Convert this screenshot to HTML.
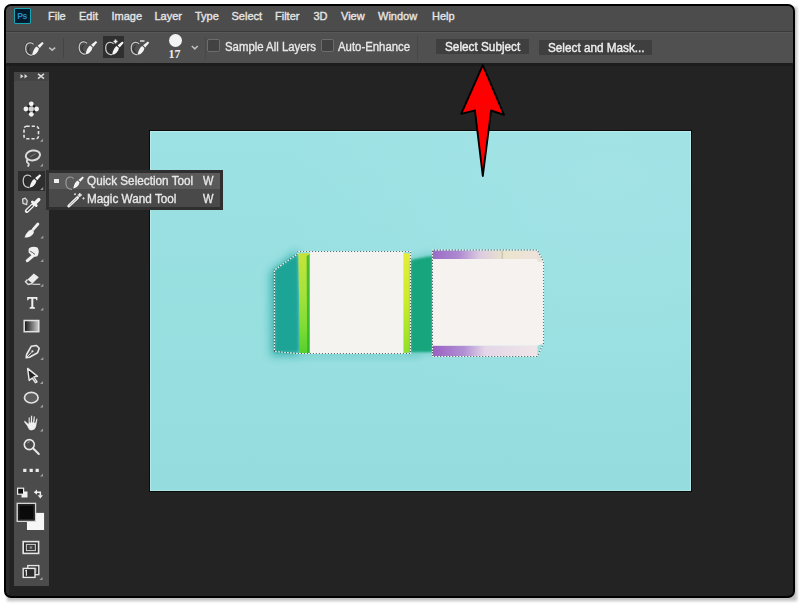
<!DOCTYPE html>
<html><head><meta charset="utf-8">
<style>
*{margin:0;padding:0;box-sizing:border-box}
html,body{width:800px;height:604px;overflow:hidden;background:#fff;font-family:"Liberation Sans",sans-serif}
.a{position:absolute}
#shadow{position:absolute;left:6.5px;top:7px;width:790px;height:594px;background:rgba(0,0,0,.25);filter:blur(1.4px)}
#frame{position:absolute;left:4px;top:3.6px;width:791px;height:594.5px;background:#232323;border:2px solid #000;border-radius:7px;overflow:hidden}
#inner{position:absolute;left:-6px;top:-6px;width:800px;height:604px}
.menu{position:absolute;top:9px;color:#e6e6e6;-webkit-text-stroke:0.35px #e6e6e6;font-size:11px;line-height:14px;white-space:nowrap}
.opt{position:absolute;color:#e8e8e8;-webkit-text-stroke:0.35px #e8e8e8;font-size:11.5px;line-height:14px;white-space:nowrap}
.btn{position:absolute;height:16px;background:#3f3f3f;color:#ededed;-webkit-text-stroke:0.4px #ededed;font-size:11.5px;line-height:16px;white-space:nowrap}
.cb{position:absolute;width:12.8px;height:12.8px;border:1.5px solid #6c6c6c;background:#424242;border-radius:2px}
svg{position:absolute;overflow:visible}
.ic{fill:none;stroke:#e8e8e8;stroke-width:1.4;stroke-linecap:round;stroke-linejoin:round}
.fl{fill:#ececec;stroke:none}
.tri{position:absolute;width:0;height:0;border-left:3px solid transparent;border-bottom:3px solid #9a9a9a}
</style></head>
<body>
<div id="shadow"></div>
<div id="frame"><div id="inner">
  <!-- menubar -->
  <div class="a" style="left:0;top:0;width:800px;height:31px;background:#4c4c4c"></div>
  <div class="a" style="left:0;top:31px;width:800px;height:1px;background:#3b3b3b"></div>
  <!-- Ps logo -->
  <div class="a" style="left:14px;top:8.6px;width:17px;height:16px;background:#001a30;border:1.6px solid #1aa5b5;border-radius:1px"></div>
  <div class="a" style="left:17.2px;top:11px;font-size:8.5px;line-height:11px;color:#2a8fc8;font-weight:bold;letter-spacing:-0.3px">Ps</div>

  <div class="menu" style="left:48px">File</div>
  <div class="menu" style="left:79px">Edit</div>
  <div class="menu" style="left:111.5px">Image</div>
  <div class="menu" style="left:154.5px">Layer</div>
  <div class="menu" style="left:195px">Type</div>
  <div class="menu" style="left:231.5px">Select</div>
  <div class="menu" style="left:275px">Filter</div>
  <div class="menu" style="left:313.5px">3D</div>
  <div class="menu" style="left:341px">View</div>
  <div class="menu" style="left:378px">Window</div>
  <div class="menu" style="left:432px">Help</div>

  <!-- options bar -->
  <div class="a" style="left:0;top:32px;width:800px;height:31px;background:#505050"></div>
  <div class="a" style="left:0;top:32px;width:800px;height:1px;background:#585858"></div>
  <div class="a" style="left:0;top:63px;width:800px;height:3px;background:#1d1d1d"></div>
  <div class="a" style="left:63px;top:38px;width:1px;height:20px;background:#444"></div>
  <div class="a" style="left:204.5px;top:37px;width:1px;height:22px;background:#484848"></div>
  <div class="a" style="left:417px;top:36px;width:1px;height:24px;background:#474747"></div>
  <div class="a" style="left:103px;top:36px;width:21px;height:22px;background:#2f2f2f"></div>

  <div class="cb" style="left:207.1px;top:39.8px"></div>
  <div class="opt" style="left:224.8px;top:40.3px;font-size:12.3px;transform:scaleX(0.925);transform-origin:0 0">Sample All Layers</div>
  <div class="cb" style="left:321.2px;top:39.8px"></div>
  <div class="opt" style="left:338.4px;top:40.3px;font-size:12.3px;transform:scaleX(0.925);transform-origin:0 0">Auto-Enhance</div>
  <div class="btn" style="left:435.5px;top:39.2px;width:93px;height:15.3px"></div><div class="opt" style="left:444.8px;top:40.8px;font-size:12.4px;transform:scaleX(0.95);transform-origin:0 0;color:#eee;-webkit-text-stroke:0.4px #eee">Select Subject</div>
  <div class="btn" style="left:538.7px;top:40px;width:113px;height:15.6px"></div><div class="opt" style="left:548px;top:41.3px;font-size:12.3px;transform:scaleX(0.955);transform-origin:0 0;color:#eee;-webkit-text-stroke:0.4px #eee">Select and Mask...</div>

  <!-- brush size -->
  <div class="a" style="left:168.5px;top:34px;width:13px;height:13px;border-radius:50%;background:#f4f4f4"></div>
  <div class="a" style="left:168.5px;top:47.3px;font-family:'Liberation Serif',serif;font-size:12px;line-height:14px;color:#ececec;font-weight:bold">17</div>

  <!-- canvas image -->
  <div class="a" style="left:149px;top:130px;width:543px;height:362px;background:#0b0b0b"></div>
  <div class="a" style="left:150px;top:131px;width:541px;height:360px;background:radial-gradient(ellipse 60% 70% at 85% 15%,rgba(170,230,233,.5) 0%,rgba(170,230,233,0) 100%),linear-gradient(180deg,#9ce1e3 0%,#98dfe0 55%,#95dcdf 100%)"></div>
  <div class="a" style="left:150px;top:131px;width:541px;height:360px;box-shadow:inset 1px 1px 0 rgba(200,240,242,.6),inset -1px -1px 0 rgba(200,240,242,.5)"></div>


  <svg width="800" height="604" style="left:0;top:0">
    <defs>
      <filter id="bl4" x="-50%" y="-50%" width="200%" height="200%"><feGaussianBlur stdDeviation="4"/></filter>
      <filter id="bl1" x="-20%" y="-20%" width="140%" height="140%"><feGaussianBlur stdDeviation="0.8"/></filter>
      <filter id="bl15" x="-30%" y="-30%" width="160%" height="160%"><feGaussianBlur stdDeviation="1.6"/></filter>
      <linearGradient id="gstrip" x1="0" y1="0" x2="0" y2="1">
        <stop offset="0" stop-color="#c6e43a"/><stop offset=".4" stop-color="#a6e23c"/><stop offset=".75" stop-color="#7ddc34"/><stop offset="1" stop-color="#56cf2c"/>
      </linearGradient>
      <linearGradient id="ystrip" x1="0" y1="0" x2="0" y2="1">
        <stop offset="0" stop-color="#e4ee3a"/><stop offset=".5" stop-color="#c8ec2a"/><stop offset="1" stop-color="#8fe02a"/>
      </linearGradient>
      <linearGradient id="ptop" x1="0" y1="0" x2="1" y2="0">
        <stop offset="0" stop-color="#9a6cc6"/><stop offset=".25" stop-color="#ae8ad0"/><stop offset=".45" stop-color="#dccbe0"/><stop offset=".7" stop-color="#ebe4cc"/><stop offset="1" stop-color="#eee2dc"/>
      </linearGradient>
      <linearGradient id="pbot" x1="0" y1="0" x2="1" y2="0">
        <stop offset="0" stop-color="#9a60c2"/><stop offset=".3" stop-color="#b290d4"/><stop offset=".5" stop-color="#e4d6e8"/><stop offset="1" stop-color="#f0e6e8"/>
      </linearGradient>
      <linearGradient id="gstrip2" x1="0" y1="0" x2="1" y2="0">
        <stop offset="0" stop-color="#b4e64a"/><stop offset=".6" stop-color="#78d838"/><stop offset="1" stop-color="#2eb42a"/>
      </linearGradient>
    </defs>
    <!-- soft shadows -->
    <path d="M270,272 L297,250 L300,356 L271,356Z" fill="#22a8a0" filter="url(#bl4)" opacity=".75"/>
    <path d="M409,260 L434,254 L434,352 L409,352Z" fill="#14a58a" filter="url(#bl4)" opacity=".45"/>
    <path d="M300,350 L420,350 L420,358 L300,358Z" fill="#4bb8b4" filter="url(#bl4)" opacity=".35"/>
    <!-- left object -->
    <path d="M274.5,270 L298,254 L299,352 L275,352Z" fill="#1ca496" filter="url(#bl15)"/>
    <path d="M298.3,253.5 L309.8,253 L309.8,353 L300,353 Z" fill="url(#gstrip)"/>
    <path d="M306.6,256 L309.8,254 L309.8,353 L307.2,353Z" fill="#22b02a" opacity=".75"/>
    <rect x="309.8" y="252" width="94" height="101.5" fill="#f5f3ef"/>
    <path d="M403.5,253 L410.5,254 L410.5,352 L403.5,353Z" fill="url(#ystrip)"/>
    <!-- between -->
    <path d="M410.7,260 L432.5,256 L432.5,352 L410.7,352Z" fill="#12a57c" filter="url(#bl1)"/>
    <!-- right object -->
    <rect x="432.5" y="250.5" width="105" height="9" fill="url(#ptop)"/>
    <rect x="432.5" y="345.5" width="105" height="10.5" fill="url(#pbot)"/>
    <path d="M432.5,259 L537.3,259 L543.5,261.7 L543.5,343.5 L537.3,345.8 L432.5,345.8Z" fill="#f5f2ef"/>
    <path d="M537.3,250 L543.5,261.7 L537.3,261.7Z" fill="#e6e4d8"/>
    <path d="M502.2,251 L502.2,259" stroke="#b9b49c" stroke-width="0.8"/>
    <!-- marching ants -->
    <g fill="none" stroke-width="1.1" stroke-dasharray="1.6 1.4">
      <path d="M274.5,351.5 L274.5,270 L298,253.5 L298,251.5 L410.5,251.5 L410.5,353.5 L298,353.5 Z M432.5,351 L432.5,250 L537.3,250 L543.5,261.7 L543.5,343.5 L537.3,356.5 L432.5,356.5Z" stroke="#3f5050" stroke-opacity=".75"/>
      <path d="M274.5,351.5 L274.5,270 L298,253.5 L298,251.5 L410.5,251.5 L410.5,353.5 L298,353.5 Z M432.5,351 L432.5,250 L537.3,250 L543.5,261.7 L543.5,343.5 L537.3,356.5 L432.5,356.5Z" stroke="#fbfbfb" stroke-dashoffset="1.5"/>
    </g>
  </svg>

  <!-- tools panel -->
  <div class="a" style="left:6px;top:66px;width:3px;height:532px;background:#2a2a2a"></div>
  <div class="a" style="left:13.5px;top:72px;width:35.5px;height:514px;background:#4b4b4b"></div>
  <div class="a" style="left:13.5px;top:72px;width:35.5px;height:9.3px;background:#444444"></div>
  <div class="a" style="left:18px;top:171px;width:27px;height:20px;background:#2e2e2e"></div>

  <!-- flyout -->
  <div class="a" style="left:46px;top:170.5px;width:177px;height:39.8px;background:#2f2f2f"></div>
  <div class="a" style="left:48.5px;top:173.3px;width:171px;height:16.5px;background:#5a5a5a"></div>
  <div class="a" style="left:48.5px;top:189.8px;width:171px;height:17.4px;background:#494949"></div>
  <div class="a" style="left:54px;top:179px;width:4.5px;height:4.5px;background:#f0f0f0"></div>
  <div class="opt" style="left:87.2px;top:174.6px;font-size:12.3px;transform:scaleX(0.955);transform-origin:0 0">Quick Selection Tool</div>
  <div class="opt" style="left:202.8px;top:174.6px;font-size:12.3px;transform:scaleX(0.9);transform-origin:0 0">W</div>
  <div class="opt" style="left:87.2px;top:192.2px;font-size:12.3px;transform:scaleX(0.955);transform-origin:0 0">Magic Wand Tool</div>
  <div class="opt" style="left:202.8px;top:192.2px;font-size:12.3px;transform:scaleX(0.9);transform-origin:0 0">W</div>


  <!-- ICONS -->
  <svg width="800" height="604" style="left:0;top:0">
    <defs>
      <symbol id="qs" viewBox="0 0 19 14" overflow="visible">
        <path d="M8.6,2.4 C7.6,1.2 6,0.6 4.4,0.9 C2,1.4 0.7,3.6 0.7,6.6 C0.7,9.8 2.4,12.4 5.4,13.1 L7,13.2" fill="none" stroke="#1e1e1e" stroke-width="3" opacity=".3"/>
        <path d="M8.6,2.4 C7.6,1.2 6,0.6 4.4,0.9 C2,1.4 0.7,3.6 0.7,6.6 C0.7,9.8 2.4,12.4 5.4,13.1 L7,13.2" fill="none" stroke="#c6c6c6" stroke-width="1.3"/>
        <path d="M5.4,4.2 C3.6,4.8 3,7 3.4,8.6 C3.7,9.8 4.4,10.6 5.6,11" fill="none" stroke="#2a2a2a" stroke-width="1"/>
        <path d="M14,6.4 L11.6,4.6 C9.6,6 7.8,9 7.1,13.3 C10.6,12.8 13.1,10.4 14,6.4Z" fill="#f4f4f4"/>
        <path d="M12.6,3.8 L17.3,0 L18.7,1.3 L14.8,5.9Z" fill="#f4f4f4"/>
      </symbol>
      <symbol id="tri" viewBox="0 0 3 3" overflow="visible"><path d="M3,0 L3,3 L0,3Z" fill="#b0b0b0" opacity=".85"/></symbol>
    </defs>
    <!-- options bar icons -->
    <use href="#qs" x="25" y="42" width="19" height="14"/>
    <path d="M49.2,47.6 L52.2,50.2 L55.2,47.6" fill="none" stroke="#bdbdbd" stroke-width="1.6"/>
    <use href="#qs" x="78.5" y="41" width="19" height="14"/>
    <use href="#qs" x="105" y="41.5" width="19" height="14"/>
    <path d="M115.5,39.5 v4 M113.5,41.5 h4" stroke="#f0f0f0" stroke-width="1.6"/>
    <use href="#qs" x="130.5" y="41.5" width="19" height="14"/>
    <path d="M140,41 h4.5" stroke="#e0e0e0" stroke-width="1.6"/>
    <path d="M191.8,46 L194.8,48.8 L197.8,46" fill="none" stroke="#bdbdbd" stroke-width="1.6"/>

    <!-- panel header -->
    <path d="M20.5,74 L23.5,76.2 L20.5,78.4Z M24.5,74 L27.5,76.2 L24.5,78.4Z" fill="#d8d8d8"/>
    <path d="M38,73.8 L44,78.6 M44,73.8 L38,78.6" stroke="#d8d8d8" stroke-width="1.5"/>

    <!-- move -->
    <g fill="#f2f2f2">
      <circle cx="31.3" cy="103.8" r="2.4"/><circle cx="25.9" cy="109" r="2.4"/>
      <circle cx="36.6" cy="109" r="2.4"/><circle cx="31.3" cy="114.3" r="2.4"/>
      <rect x="28.8" y="106.5" width="5" height="5" fill="#cfcfcf"/>
    </g>
    <g fill="#151515"><circle cx="28.6" cy="106.3" r="1.1"/><circle cx="34" cy="106.3" r="1.1"/><circle cx="28.6" cy="111.7" r="1.1"/><circle cx="34" cy="111.7" r="1.1"/></g>
    <!-- marquee -->
    <rect x="24" y="126.3" width="14.5" height="12.5" rx="2.5" fill="none" stroke="#e6e6e6" stroke-width="1.6" stroke-dasharray="3.2 2"/>
    <use href="#tri" x="40" y="138.8" width="3" height="3"/>
    <!-- lasso -->
    <ellipse cx="32.9" cy="155.4" rx="7.2" ry="4.9" transform="rotate(-10 32.9 155.4)" fill="#474747" stroke="#dcdcdc" stroke-width="2"/>
    <path d="M30.2,156.8 L35.6,153.6" stroke="#757575" stroke-width="1.1"/>
    <path d="M27.4,159.6 C26.2,161.2 27,162.6 28.2,163.2 C29,163.8 28.8,165 28.2,166" fill="none" stroke="#dcdcdc" stroke-width="1.8" stroke-linecap="round"/>
    <use href="#tri" x="40" y="163.5" width="3" height="3"/>
    <!-- quick selection (selected) -->
    <use href="#qs" x="22.5" y="174.3" width="19" height="14"/>
    <use href="#tri" x="40.2" y="187" width="3" height="3"/>
    <!-- eyedropper -->
    <path d="M22.6,199.2 L25.2,198.2 L27.2,200.6 L26.6,204.6 L23,203.4Z" fill="#5a5a5a" stroke="#d8d8d8" stroke-width="1.3" stroke-linejoin="round"/>
    <path d="M26.8,211 L32.6,205.4" stroke="#ececec" stroke-width="4" stroke-linecap="round"/>
    <path d="M27.2,210.6 L32.2,205.8" stroke="#333" stroke-width="1.3" stroke-linecap="round"/>
    <path d="M32.4,202 L36.2,205.6" stroke="#f4f4f4" stroke-width="2.8" stroke-linecap="round"/>
    <path d="M35,203.2 L38.8,199.6" stroke="#f4f4f4" stroke-width="3.4" stroke-linecap="round"/>
    <!-- brush -->
    <path d="M37.9,224 L33.2,229.4" stroke="#f0f0f0" stroke-width="2.8" stroke-linecap="round"/>
    <path d="M31.6,229.6 L34,231.8 C33.2,235.3 30,237.6 24.6,237.6 C25.6,233.6 28.3,230.6 31.6,229.6Z" fill="#f2f2f2"/>
    <use href="#tri" x="40.3" y="235.5" width="3" height="3"/>
    <!-- stamp -->
    <path d="M28.6,249 C30,246.6 34.2,246 37.4,247.4 C39.2,249.6 39.2,253.6 37.3,256.2 C35.6,257 33.5,256.6 31.8,255.6 L28.6,252.6Z" fill="#efefef"/>
    <path d="M34.2,254.8 L27.4,260.6" stroke="#efefef" stroke-width="3.2" stroke-linecap="round"/>
    <path d="M30.2,251.2 C32,252.2 33.6,253.2 35,254.4" stroke="#5a5a5a" stroke-width="1" fill="none"/>
    <use href="#tri" x="40.3" y="259" width="3" height="3"/>
    <!-- eraser -->
    <path d="M33.8,273.5 L38.8,277.3 L32.5,283.5 L27.5,279.5Z" fill="#ececec"/>
    <path d="M27.5,279.5 L25.5,281.8 L28.2,284.4 L32.5,283.5" fill="none" stroke="#e0e0e0" stroke-width="1.4"/>
    <path d="M32.5,284.3 L40.3,284.3" stroke="#d8d8d8" stroke-width="1.2"/>
    <use href="#tri" x="40.3" y="283.8" width="3" height="3"/>
    <!-- type T -->
    <path d="M27.2,297 H37.4 V300.3 H36.3 L35.8,298.8 H33.3 V306.8 L35,307.4 V308.7 H29.6 V307.4 L31.3,306.8 V298.8 H28.8 L28.3,300.3 H27.2Z" fill="#f0f0f0"/>
    <use href="#tri" x="40.3" y="307.5" width="3" height="3"/>
    <!-- gradient -->
    <defs><linearGradient id="gr" x1="0" x2="1"><stop offset="0" stop-color="#111"/><stop offset="1" stop-color="#cfcfcf"/></linearGradient></defs>
    <rect x="24.2" y="320.5" width="14.6" height="11.2" fill="url(#gr)" stroke="#e2e2e2" stroke-width="1.5"/>
    <!-- pen -->
    <path d="M36.5,345.5 L39.2,348.2 L37.6,352.8 L29.5,357.2 L26.2,357.8 L26.6,354.5 L31.2,346.3Z" fill="none" stroke="#e8e8e8" stroke-width="1.6" stroke-linejoin="round"/>
    <circle cx="32.4" cy="351.3" r="1.1" fill="#e8e8e8"/>
    <path d="M27,357 L31.5,352.3" stroke="#e8e8e8" stroke-width="1"/>
    <use href="#tri" x="40.3" y="357" width="3" height="3"/>
    <!-- path selection arrow -->
    <path d="M27.6,368.4 L37.5,376.4 L33.8,376.9 L37,381.8 L35.4,382.7 L32.3,378 L29.2,380.4Z" fill="#242424" stroke="#eaeaea" stroke-width="1.4" stroke-linejoin="round"/>
    <use href="#tri" x="40" y="381" width="3" height="3"/>
    <!-- ellipse -->
    <ellipse cx="31.3" cy="397.7" rx="6.8" ry="5.3" fill="#5d5d5d" stroke="#e2e2e2" stroke-width="1.7"/>
    <use href="#tri" x="40" y="404.5" width="3" height="3"/>
    <!-- hand -->
    <path d="M26.8,425.8 L24,422.2 C23.4,421.2 24.6,420.4 25.4,421.1 L28.3,423.5 L28.3,417.8 C28.3,416.6 30,416.6 30,417.8 L30.2,422.5 L30.7,416.2 C30.8,415 32.5,415 32.5,416.3 L32.6,422.3 L33.4,416.8 C33.6,415.7 35.2,415.8 35.1,417 L34.8,422.8 L36.1,418.8 C36.5,417.8 37.9,418.1 37.7,419.2 L36.6,425.6 C36,429 33.8,430.8 31,430.8 C29.2,430.8 27.9,428.2 26.8,425.8Z" fill="#f0f0f0" stroke="#2a2a2a" stroke-width="0.5"/>
    <use href="#tri" x="40" y="428.5" width="3" height="3"/>
    <!-- zoom -->
    <circle cx="29.3" cy="444.6" r="5" fill="none" stroke="#e8e8e8" stroke-width="1.6"/>
    <path d="M33,448.3 L38.8,454" stroke="#e8e8e8" stroke-width="2" stroke-linecap="round"/>
    <path d="M27.5,443.2 a2,2 0 0 1 2,-1.4" fill="none" stroke="#aaa" stroke-width="1"/>
    <!-- dots -->
    <g fill="#ececec"><rect x="23.2" y="468.8" width="3.2" height="3.2"/><rect x="29.6" y="468.8" width="3.2" height="3.2"/><rect x="35.6" y="468.8" width="3.2" height="3.2"/></g>
    <use href="#tri" x="40" y="473.5" width="3" height="3"/>
    <!-- default colors -->
    <rect x="21.5" y="491.5" width="6" height="6" fill="#f0f0f0"/>
    <rect x="17.6" y="488.2" width="6" height="6" fill="#111" stroke="#eee" stroke-width="1.2"/>
    <!-- swap -->
    <path d="M36.5,492.2 L40.3,492.2 L40.3,495.5" fill="none" stroke="#eee" stroke-width="1.5"/>
    <path d="M33.8,492.2 L37,489.6 L37,494.8Z M37.7,495.2 L42.9,495.2 L40.3,498.6Z" fill="#eee"/>
    <!-- fg/bg -->
    <rect x="26.6" y="512.4" width="17.9" height="17.9" fill="#f6f6f6" stroke="#2a2a2a" stroke-width=".6"/>
    <rect x="17.2" y="503.4" width="18.3" height="17.9" fill="#0a0a0a" stroke="#d6d6d6" stroke-width="1.4"/>
    <rect x="18.9" y="505.1" width="14.9" height="14.5" fill="none" stroke="#262626" stroke-width="1.2"/>
    <!-- quick mask -->
    <rect x="23.2" y="541.6" width="15.4" height="11.8" fill="#2c2c2c" stroke="#e6e6e6" stroke-width="1.6"/>
    <rect x="26.4" y="544.4" width="9" height="6.2" fill="#3a3a3a" stroke="#c8c8c8" stroke-width="1.1"/>
    <rect x="29.6" y="546.3" width="2.6" height="2.4" fill="#8a8a8a"/>
    <!-- screen mode -->
    <rect x="27.8" y="565.6" width="11" height="9" fill="#2e2e2e" stroke="#e4e4e4" stroke-width="1.4"/>
    <rect x="29.8" y="567.6" width="7" height="5" fill="#6a6a6a"/>
    <rect x="23.2" y="568.4" width="11.8" height="9" fill="#2c2c2c" stroke="#e8e8e8" stroke-width="1.4"/>
    <path d="M25.2,571 L26.4,570.4 V575.8" fill="none" stroke="#e0e0e0" stroke-width="1.2"/>
    <use href="#tri" x="39.5" y="577" width="3" height="3"/>
    <!-- flyout icons -->
    <path d="M73.6,178.6 C72.6,177.4 71,176.8 69.4,177.1 C67,177.6 65.9,179.8 65.9,182.8 C65.9,186 67.4,188.6 70.4,189.2 L72,189.3" fill="none" stroke="#9a9a9a" stroke-width="1.2"/>
    <path d="M79.6,182.2 L77.4,180.6 C75.5,181.9 73.9,184.6 73.3,188.4 C76.4,188 78.8,185.8 79.6,182.2Z" fill="#f4f4f4"/>
    <path d="M78.4,179.9 L82.6,176.5 L83.9,177.7 L80.4,181.8Z" fill="#f4f4f4"/>
    <path d="M68.8,206 L77.6,197.6" stroke="#f0f0f0" stroke-width="3" stroke-linecap="round"/>
    <path d="M69.6,205.2 L76.8,198.4" stroke="#555" stroke-width="0.8" stroke-linecap="round" opacity=".6"/>
    <path d="M79.8,193 v4 M77.8,195 h4" stroke="#f0f0f0" stroke-width="1.3"/>
    <path d="M83.5,197.3 v2.2 M82.4,198.4 h2.2 M75,193.3 v1.8 M74.1,194.2 h1.8" stroke="#e4e4e4" stroke-width="1"/>
  </svg>

  <!-- arrow -->
  <svg width="800" height="604" style="left:0;top:0">
    <polygon points="482.8,65.2 504,114.9 491.1,110.5 482.8,176 474.9,110.3 461.2,113.8" fill="#ff0000" stroke="#000" stroke-width="1.9" stroke-linejoin="round"/>
  </svg>
</div></div>
</body></html>
